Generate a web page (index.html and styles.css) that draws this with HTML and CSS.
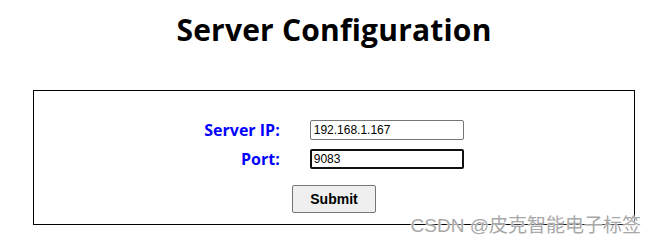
FILE: index.html
```html
<!DOCTYPE html>
<html lang="en">
<head>
    <meta charset="UTF-8">
    <meta name="viewport" content="width=device-width, initial-scale=1.0">
    <title>Server Configuration</title>
    <link rel="stylesheet" href="styles.css">
</head>
<body>

    <h1>Server Configuration</h1>

    <form class="configBox" onsubmit="return false">
        <div class="fields">
            <label for="serverIp">Server IP:</label>
            <input type="text" id="serverIp" value="192.168.1.167">
            <label for="serverPort">Port:</label>
            <input type="text" id="serverPort" class="focused" value="9083">
        </div>
        <button type="submit" class="submitBtn">Submit</button>
    </form>

    <div class="watermark">CSDN @皮克智能电子标签</div>

</body>
</html>
```

FILE: styles.css
```css
body {
    font-family: "Open Sans", "Noto Sans", sans-serif;
    margin: 0;
    background-color: #fff;
    color: #000;
    position: relative;
    height: 242px;
    overflow: hidden;
}
h1 {
    text-align: center;
    font-size: 30px;
    font-weight: bold;
    letter-spacing: 0.2px;
    margin: 0;
    padding: 10px 0 0 8px;
    height: 90px;
    box-sizing: border-box;
    line-height: 40px;
}
.configBox {
    margin: 0 25px 0 33px;
    border: 1px solid #000;
    padding: 29px 0 11px;
    display: flex;
    flex-direction: column;
    align-items: center;
}
.fields {
    display: grid;
    grid-template-columns: auto auto;
    column-gap: 30px;
    row-gap: 9px;
    align-items: center;
}
.fields label {
    text-align: right;
    font-weight: bold;
    font-size: 16px;
    line-height: 20px;
    color: #0000ff;
}
.fields input {
    width: 154px;
    height: 20px;
    box-sizing: border-box;
    border: 1px solid #767676;
    border-radius: 2px;
    padding: 0 3px;
    font-family: "Liberation Sans", Arial, sans-serif;
    font-size: 12px;
    color: #000;
}
.fields input.focused {
    border: 2px solid #101010;
    padding: 0 2px;
}
.submitBtn {
    margin-top: 16px;
    width: 84px;
    height: 28px;
    font-family: "Liberation Sans", Arial, sans-serif;
    font-weight: bold;
    font-size: 14px;
    background-color: #efefef;
    border: 1px solid #767676;
    border-radius: 2px;
}
.watermark {
    position: absolute;
    right: 19px;
    top: 210px;
    font-family: "Liberation Sans", "Noto Sans CJK SC", sans-serif;
    font-size: 19px;
    color: #a8a8a8;
    text-shadow: 0 0 2px #fff, 0 0 2px #fff;
}
```
